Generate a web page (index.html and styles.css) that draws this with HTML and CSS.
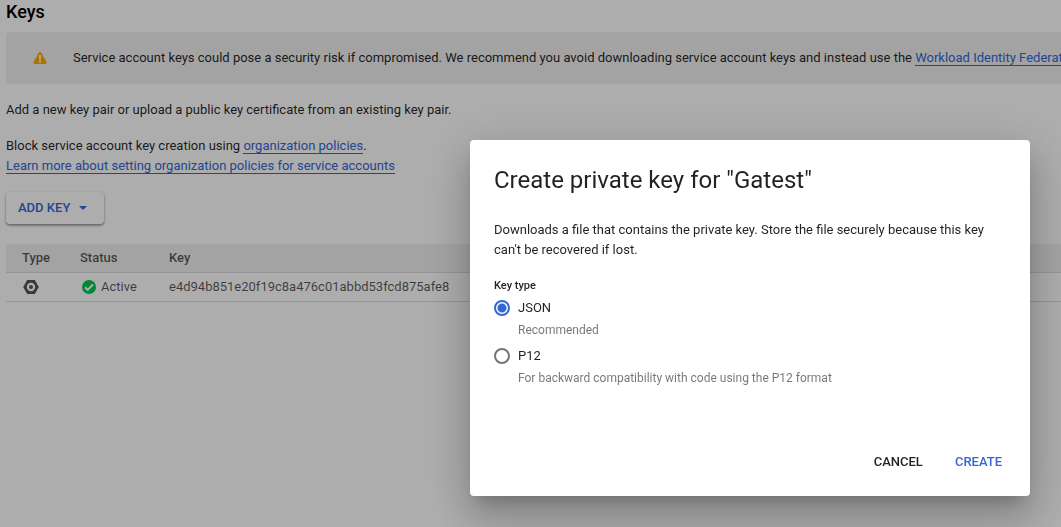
FILE: index.html
```html
<!DOCTYPE html>
<html lang="en">
<head>
    <meta charset="UTF-8">
    <meta name="viewport" content="width=device-width, initial-scale=1.0">
    <title>Service account keys</title>
    <link rel="stylesheet" href="styles.css">
</head>
<body>
    <main class="page">
        <h2 class="page-title">Keys</h2>

        <div class="banner">
            <svg class="banner-icon" width="14" height="14" viewBox="0 0 14 14">
                <path fill="#f9ab00" stroke="#f9ab00" stroke-width="3" stroke-linejoin="round" d="M7 2.500L12 11.500H2z"/>
                <path fill="#fff" d="M6 4h2v4.500H6zM6 9.500h2v2H6z"/>
            </svg>
            <p class="banner-text">Service account keys could pose a security risk if compromised. We recommend you avoid downloading service account keys and instead use the <a href="#">Workload Identity Federation</a>.</p>
        </div>

        <p class="intro">Add a new key pair or upload a public key certificate from an existing key pair.</p>
        <p class="intro">Block service account key creation using <a href="#">organization policies</a>.<br>
            <a href="#">Learn more about setting organization policies for service accounts</a></p>

        <button type="button" class="add-key">
            ADD KEY
            <svg width="10" height="4" viewBox="0 0 10 4"><path fill="currentColor" d="M1 0h8L5 4z"/></svg>
        </button>

        <table class="keys-table">
            <thead>
                <tr>
                    <th class="col-type">Type</th>
                    <th class="col-status">Status</th>
                    <th>Key</th>
                </tr>
            </thead>
            <tbody>
                <tr>
                    <td>
                        <svg class="type-icon" width="18" height="16" viewBox="0 0 18 16">
                            <path fill="#555" fill-rule="evenodd" d="M5.200 1h7.600l4 7-4 7H5.200l-4-7zM9 3.800a4.200 4.200 0 1 0 0 8.400 4.200 4.200 0 1 0 0-8.400z"/>
                            <circle cx="9" cy="8" r="2" fill="#555"/>
                        </svg>
                    </td>
                    <td>
                        <span class="status">
                            <svg width="14" height="14" viewBox="0 0 14 14">
                                <circle cx="7" cy="7" r="7" fill="#00c853"/>
                                <path fill="none" stroke="#fff" stroke-width="2" d="M3 7.200l2.700 2.700L11 4.500"/>
                            </svg>
                            Active
                        </span>
                    </td>
                    <td>e4d94b851e20f19c8a476c01abbd53fcd875afe8</td>
                </tr>
            </tbody>
        </table>
    </main>

    <div class="backdrop">
        <form class="dialog" role="dialog" aria-labelledby="dialog-title">
            <h1 class="dialog-title" id="dialog-title">Create private key for "Gatest"</h1>
            <p class="dialog-text">Downloads a file that contains the private key. Store the file securely because this key can't be recovered if lost.</p>

            <fieldset class="key-type">
                <legend>Key type</legend>
                <div class="option">
                    <input type="radio" name="key-type" id="type-json" checked>
                    <label for="type-json">JSON</label>
                    <p class="hint">Recommended</p>
                </div>
                <div class="option">
                    <input type="radio" name="key-type" id="type-p12">
                    <label for="type-p12">P12</label>
                    <p class="hint">For backward compatibility with code using the P12 format</p>
                </div>
            </fieldset>

            <div class="actions">
                <button type="button" class="text-button">CANCEL</button>
                <button type="button" class="text-button primary">CREATE</button>
            </div>
        </form>
    </div>
</body>
</html>
```

FILE: styles.css
```css
* {
    box-sizing: border-box;
}

body {
    margin: 0;
    overflow: hidden;
    background: #fff;
    color: rgba(0, 0, 0, 0.87);
    font-family: Roboto, Arial, sans-serif;
    font-size: 13px;
    line-height: 20px;
}

h1, h2, p {
    margin: 0;
}

button {
    border: none;
    background: none;
    font: inherit;
    font-weight: 500;
    cursor: pointer;
}

.page {
    padding-left: 6px;
}

.page a {
    color: #3367d6;
    text-decoration: none;
    border-bottom: 1px solid;
}

.page-title {
    color: #000;
    font-size: 18px;
    font-weight: 500;
    line-height: 24px;
}

/* Warning banner */
.banner {
    display: flex;
    align-items: center;
    margin: 8px 0 16px;
    padding: 16px 0 16px 27px;
    border-radius: 4px 0 0 4px;
    background: #f1f1f1;
    white-space: nowrap;
    overflow: hidden;
}

.banner-icon {
    flex: none;
    margin-right: 26px;
}

.intro {
    margin-bottom: 16px;
}

.add-key {
    display: flex;
    align-items: center;
    gap: 8px;
    height: 32px;
    margin-bottom: 20px;
    padding: 0 16px 0 12px;
    border-radius: 4px;
    background: #fff;
    color: #3367d6;
    box-shadow: 0 1px 3px rgba(0, 0, 0, 0.3), 0 2px 2px rgba(0, 0, 0, 0.2);
}

/* Keys table */
.keys-table {
    width: 100%;
    border-collapse: separate;
    border-spacing: 0;
    color: rgba(0, 0, 0, 0.66);
    text-align: left;
}

.keys-table th,
.keys-table td {
    height: 29px;
    padding: 4px 16px;
    border-bottom: 1px solid #dcdcdc;
    font-weight: 400;
}

.keys-table th {
    background: #f1f1f1;
    font-weight: 500;
}

.keys-table .col-type {
    width: 58px;
    padding-right: 0;
}

.col-status {
    width: 89px;
}

.type-icon {
    display: block;
}

.keys-table td:first-child {
    padding-right: 0;
}

.status {
    display: flex;
    align-items: center;
    gap: 5px;
    padding-left: 2px;
}

/* Dialog */
.backdrop {
    position: fixed;
    inset: 0;
    display: flex;
    align-items: flex-start;
    justify-content: flex-end;
    padding: 140px 31px 0;
    background: rgba(0, 0, 0, 0.32);
}

.dialog {
    display: flex;
    flex-direction: column;
    width: 560px;
    padding: 24px 24px 16px;
    border-radius: 4px;
    background: #fff;
    box-shadow: 0 11px 15px -7px rgba(0, 0, 0, 0.2),
                0 24px 38px 3px rgba(0, 0, 0, 0.14),
                0 9px 46px 8px rgba(0, 0, 0, 0.12);
}

.dialog-title {
    margin-bottom: 24px;
    font-size: 24px;
    font-weight: 400;
    line-height: 32px;
}

.key-type {
    margin: 0 0 52px;
    padding: 16px 0 0;
    border: none;
}

.key-type legend {
    float: left;
    width: 100%;
    padding: 0;
    font-size: 11px;
    font-weight: 500;
}

.option {
    display: grid;
    grid-template-columns: 16px 1fr;
    column-gap: 8px;
    align-items: center;
    clear: both;
}

.option label {
    line-height: 24px;
}

.option input {
    appearance: none;
    width: 16px;
    height: 16px;
    margin: 0;
    border: 2px solid #757575;
    border-radius: 50%;
}

.option input:checked {
    border-color: #3367d6;
    background: radial-gradient(circle, #3367d6 4px, transparent 5px);
}

.hint {
    grid-column: 2;
    padding-bottom: 4px;
    color: rgba(0, 0, 0, 0.54);
    font-size: 12px;
}

.actions {
    display: flex;
    justify-content: flex-end;
    gap: 8px;
}

.text-button {
    height: 36px;
    padding: 0 12px;
    color: rgba(0, 0, 0, 0.87);
}

.text-button.primary {
    padding-right: 4px;
    color: #3367d6;
}
```
